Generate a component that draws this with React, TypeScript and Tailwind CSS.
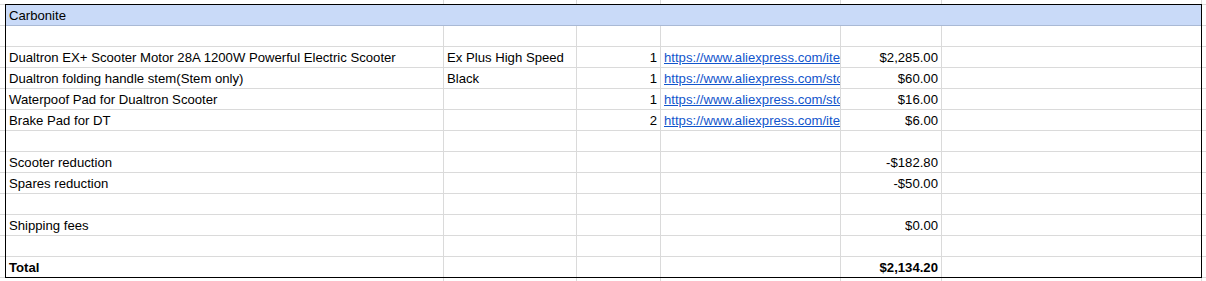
import React from "react";

type Row =
  | { kind: "title"; text: string }
  | {
      kind: "data";
      name?: string;
      variant?: string;
      qty?: string;
      link?: string;
      price?: string;
      bold?: boolean;
    };

const rows: Row[] = [
  { kind: "title", text: "Carbonite" },
  { kind: "data" },
  {
    kind: "data",
    name: "Dualtron EX+ Scooter Motor 28A 1200W Powerful Electric Scooter",
    variant: "Ex Plus High Speed",
    qty: "1",
    link: "https://www.aliexpress.com/item/32854217593.html",
    price: "$2,285.00",
  },
  {
    kind: "data",
    name: "Dualtron folding handle stem(Stem only)",
    variant: "Black",
    qty: "1",
    link: "https://www.aliexpress.com/store/product/Dualtron-folding-handle-stem",
    price: "$60.00",
  },
  {
    kind: "data",
    name: "Waterpoof Pad for Dualtron Scooter",
    qty: "1",
    link: "https://www.aliexpress.com/store/product/Waterproof-Pad",
    price: "$16.00",
  },
  {
    kind: "data",
    name: "Brake Pad for DT",
    qty: "2",
    link: "https://www.aliexpress.com/item/32790184466.html",
    price: "$6.00",
  },
  { kind: "data" },
  { kind: "data", name: "Scooter reduction", price: "-$182.80" },
  { kind: "data", name: "Spares reduction", price: "-$50.00" },
  { kind: "data" },
  { kind: "data", name: "Shipping fees", price: "$0.00" },
  { kind: "data" },
  { kind: "data", name: "Total", price: "$2,134.20", bold: true },
];

const cell =
  "h-[21px] border-r border-b border-[#dadada] flex items-end pb-[2px] overflow-hidden whitespace-nowrap leading-[15px]";

function StubRow({ height, bottom }: { height: string; bottom: boolean }) {
  const b = bottom ? "border-b" : "";
  return (
    <>
      <div className={`${height} ${b} border-[#dadada]`} />
      {[0, 1, 2, 3, 4, 5].map((i) => (
        <div key={i} className={`${height} ${b} border-r border-[#dadada]`} />
      ))}
      <div className={`${height} ${b} border-[#dadada]`} />
    </>
  );
}

export default function App() {
  return (
    <div className="relative w-[1206px] h-[281px] overflow-hidden bg-white font-['Liberation_Sans',Arial,sans-serif] text-[13.15px] text-black">
      <div className="grid grid-cols-[6px_438px_133px_84px_180px_101px_260px_1fr]">
        <StubRow height="h-[5px]" bottom />
        {rows.map((r, i) => {
          if (r.kind === "title") {
            return (
              <React.Fragment key={i}>
                <div className="h-[21px] border-b border-r border-[#dadada]" />
                <div className="col-span-6 h-[21px] bg-[#c9daf8] border-b border-[#a9b9d5] flex items-end pb-[2px] px-[3px] leading-[15px]">
                  {r.text}
                </div>
                <div className="h-[21px] border-b border-[#dadada]" />
              </React.Fragment>
            );
          }
          const weight = r.bold ? "font-bold" : "";
          return (
            <React.Fragment key={i}>
              <div className="h-[21px] border-b border-r border-[#dadada]" />
              <div className={`${cell} px-[3px] ${weight}`}>{r.name}</div>
              <div className={`${cell} px-[3px]`}>{r.variant}</div>
              <div className={`${cell} justify-end pr-[3px]`}>{r.qty}</div>
              <div className={`${cell} pl-[3px]`}>
                {r.link && (
                  <a
                    href="#"
                    className="block w-full overflow-hidden whitespace-nowrap text-[#1155cc] underline"
                  >
                    {r.link}
                  </a>
                )}
              </div>
              <div className={`${cell} justify-end pr-[3px] ${weight}`}>{r.price}</div>
              <div className={cell} />
              <div className="h-[21px] border-b border-[#dadada]" />
            </React.Fragment>
          );
        })}
        <StubRow height="h-[4px]" bottom={false} />
      </div>
      {/* range border around the order block */}
      <div className="pointer-events-none absolute left-[5px] top-[4px] w-[1197px] h-[274px] border border-black" />
    </div>
  );
}
